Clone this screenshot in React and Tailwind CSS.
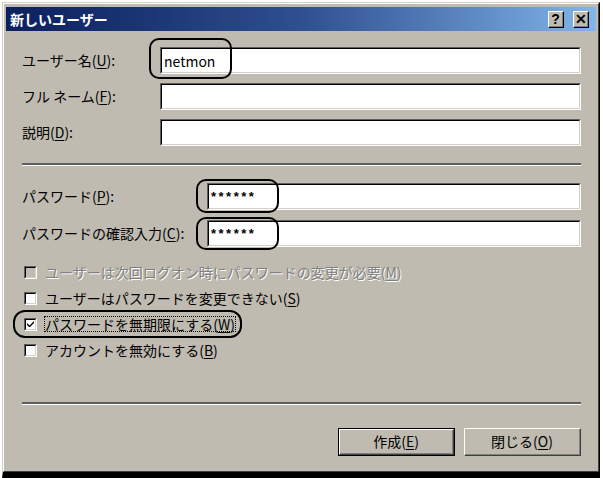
import React from 'react';

const jp = "font-['Noto_Sans_CJK_JP','Noto_Sans',sans-serif]";

function Key({ children }) {
  return <span className="underline underline-offset-2">{children}</span>;
}

// sunken edit box, Win2000 style
function Field({ className = '', children }) {
  return (
    <div className={`h-[27px] border-t border-l border-t-[#5e5e5e] border-l-[#5e5e5e] border-b border-r border-b-white border-r-white ${className}`}>
      <div className="h-full border-t border-l border-t-black border-l-black border-b border-r border-b-[#d4d0c8] border-r-[#d4d0c8] bg-white flex items-center pl-[2px]">
        {children}
      </div>
    </div>
  );
}

function Check({ checked, disabled }) {
  return (
    <div className="w-[13px] h-[13px] shrink-0 border-t border-l border-t-[#5e5e5e] border-l-[#5e5e5e] border-b border-r border-b-white border-r-white">
      <div className={`w-full h-full border-t border-l border-t-black border-l-black border-b border-r border-b-[#d4d0c8] border-r-[#d4d0c8] flex items-center justify-center ${disabled ? 'bg-[#bfbbb0]' : 'bg-white'}`}>
        {checked && (
          <svg width="7" height="7" viewBox="0 0 7 7">
            <path d="M0 2 L0 4 L2 6 L3 6 L7 2 L7 0 L2.5 4.5 Z" fill="black" />
          </svg>
        )}
      </div>
    </div>
  );
}

function Button({ children, isDefault }) {
  const face = (
    <div className="h-full border-t border-l border-t-white border-l-white border-b border-r border-b-[#404040] border-r-[#404040]">
      <div className="h-full border-b border-r border-b-[#808080] border-r-[#808080] flex items-center justify-center text-[14px] text-black">
        {children}
      </div>
    </div>
  );
  return (
    <div className={`w-[117px] h-[28px] ${isDefault ? 'border border-black' : ''}`}>{face}</div>
  );
}

function TitleButton({ children }) {
  return (
    <div className="w-[16px] h-[17px] border-t border-l border-t-white border-l-white border-b border-r border-b-black border-r-black bg-[#bfbbb0]">
      <div className="h-full border-b border-r border-b-[#808080] border-r-[#808080] flex items-center justify-center text-[14px] font-bold leading-none text-black font-['Liberation_Sans',sans-serif]">
        {children}
      </div>
    </div>
  );
}

export default function App() {
  return (
    <div className={`relative w-[603px] h-[478px] bg-white overflow-hidden ${jp}`}>
      <div className="ml-[2px] mt-[2px] w-[598px] h-[476px] border-t border-l border-t-[#d4d0c8] border-l-[#d4d0c8] border-r border-b-[6px] border-r-black border-b-black">
        <div className="h-full flex flex-col bg-[#bfbbb0] border-t border-l border-t-white border-l-white border-r border-b border-r-[#404040] border-b-[#404040] pt-[3px] px-[2px]">
          {/* title bar */}
          <div className="h-[24px] shrink-0 flex items-center bg-gradient-to-r from-[#0c1f5e] via-[#2f4f8e] to-[#82b5ea] pl-[4px] pr-[7px]">
            <span className="text-white font-bold text-[14px] leading-none">新しいユーザー</span>
            <div className="ml-auto flex gap-[9px]">
              <TitleButton>?</TitleButton>
              <TitleButton>✕</TitleButton>
            </div>
          </div>

          {/* body */}
          <div className="flex flex-col pl-[16px] pr-[15px] text-[14px] text-black">
            <div className="mt-[16px] flex items-center">
              <span className="w-[138px] shrink-0">ユーザー名(<Key>U</Key>):</span>
              <Field className="flex-1">
                <span className="text-[14px] leading-none">netmon</span>
              </Field>
            </div>
            <div className="mt-[9px] flex items-center">
              <span className="w-[138px] shrink-0">フル ネーム(<Key>F</Key>):</span>
              <Field className="flex-1" />
            </div>
            <div className="mt-[9px] flex items-center">
              <span className="w-[138px] shrink-0">説明(<Key>D</Key>):</span>
              <Field className="flex-1" />
            </div>

            <div className="mt-[17px] border-t-2 border-t-[#5e5e5e] border-b border-b-white" />

            <div className="mt-[17px] flex items-center">
              <span className="w-[185px] shrink-0">パスワード(<Key>P</Key>):</span>
              <Field className="flex-1">
                <span className="text-[13px] leading-none tracking-[2.5px] font-['Liberation_Sans',sans-serif] font-bold">******</span>
              </Field>
            </div>
            <div className="mt-[10px] flex items-center">
              <span className="w-[185px] shrink-0">パスワードの確認入力(<Key>C</Key>):</span>
              <Field className="flex-1">
                <span className="text-[13px] leading-none tracking-[2.5px] font-['Liberation_Sans',sans-serif] font-bold">******</span>
              </Field>
            </div>

            <div className="mt-[15px] flex flex-col gap-[6px] pl-[2px]">
              <div className="h-[20px] flex items-center gap-[8px]">
                <Check disabled />
                <span className="text-[#808080] [text-shadow:1px_1px_0_#ffffff]">
                  ユーザーは次回ログオン時にパスワードの変更が必要(<Key>M</Key>)
                </span>
              </div>
              <div className="h-[20px] flex items-center gap-[8px]">
                <Check />
                <span>ユーザーはパスワードを変更できない(<Key>S</Key>)</span>
              </div>
              <div className="h-[20px] flex items-center gap-[7px]">
                <Check checked />
                <span className="border border-dotted border-black leading-[14px]">
                  パスワードを無期限にする(<Key>W</Key>)
                </span>
              </div>
              <div className="h-[20px] flex items-center gap-[8px]">
                <Check />
                <span>アカウントを無効にする(<Key>B</Key>)</span>
              </div>
            </div>

            <div className="mt-[42px] border-t-2 border-t-[#5e5e5e] border-b border-b-white" />

            <div className="mt-[23px] flex justify-end gap-[9px]">
              <Button isDefault>作成(<Key>E</Key>)</Button>
              <Button>閉じる(<Key>O</Key>)</Button>
            </div>
          </div>
        </div>
      </div>

      {/* hand-drawn annotation marks */}
      <div className="absolute left-[149px] top-[38px] w-[83px] h-[41px] border-2 border-black rounded-[10px]" />
      <div className="absolute left-[196px] top-[179px] w-[83px] h-[34px] border-2 border-black rounded-[10px]" />
      <div className="absolute left-[196px] top-[217px] w-[83px] h-[33px] border-2 border-black rounded-[10px]" />
      <div className="absolute left-[13px] top-[310px] w-[229px] h-[28px] border-2 border-black rounded-[12px]" />
    </div>
  );
}
